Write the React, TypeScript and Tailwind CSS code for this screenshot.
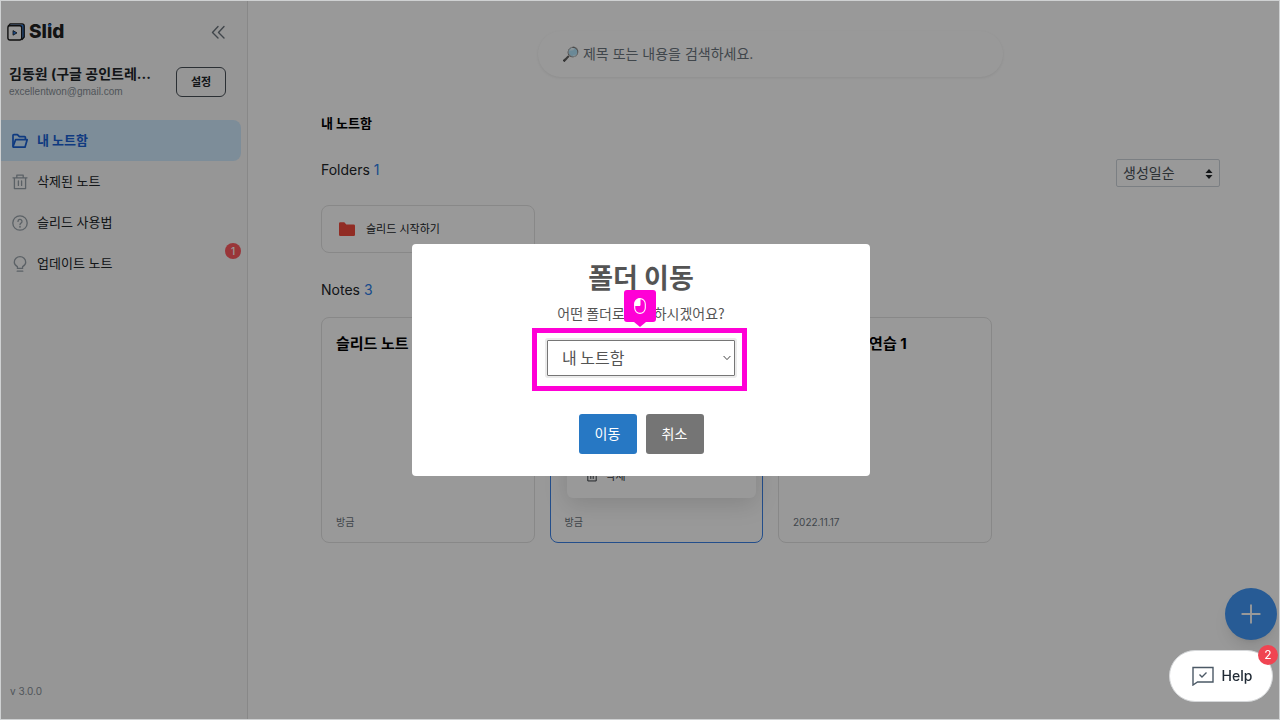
import { ReactNode } from 'react'
import { Plus } from 'lucide-react'

const NOTES = [
  { id: 1, title: '슬리드 노트 정리', date: '방금' },
  { id: 2, title: '슬리드 노트', date: '방금', active: true },
  { id: 3, title: '슬리드 노트 연습 1', date: '2022.11.17' },
]

function FolderOpenIcon() {
  return (
    <svg className="w-4 h-4 shrink-0" viewBox="0 0 16 16" fill="none" stroke="currentColor" strokeWidth="1.7" strokeLinejoin="round">
      <path d="M1 13.600V2.400a.8.8 0 0 1 .8-.8h3.600l2 2h5.200a.8.8 0 0 1 .8.8v2" />
      <path d="M1 13.800 3.600 6.600h11.600L13 14.200H1.400z" />
    </svg>
  )
}

function TrashIcon({ className = 'w-4 h-4' }: { className?: string }) {
  return (
    <svg className={className + ' shrink-0'} viewBox="0 0 16 16" fill="none" stroke="currentColor" strokeWidth="1.3" strokeLinecap="round" strokeLinejoin="round">
      <path d="M1 3.800h14M4.800 3.800V1.200h6.400v2.600M2.400 3.800v10.800h11.200V3.800M6.400 7v4.400M9.600 7v4.400" />
    </svg>
  )
}

function HelpIcon() {
  return (
    <svg className="w-4 h-4 shrink-0" viewBox="0 0 16 16" fill="none" stroke="currentColor" strokeWidth="1.3" strokeLinecap="round">
      <circle cx="8" cy="8" r="7.2" />
      <path d="M6 6.400a2 2 0 1 1 3 1.700c-.7.4-1 .8-1 1.500" />
      <circle cx="8" cy="11.700" r=".3" fill="currentColor" />
    </svg>
  )
}

function BulbIcon() {
  return (
    <svg className="w-4 h-4 shrink-0" viewBox="0 0 16 16" fill="none" stroke="currentColor" strokeWidth="1.3" strokeLinecap="round" strokeLinejoin="round">
      <path d="M5.400 12.400v-1.800C3.600 9.700 2.300 8.200 2.300 6.200a5.700 5.500 0 0 1 11.400 0c0 2-1.300 3.500-3.100 4.400v1.800zM5.200 15.200h5.600" />
    </svg>
  )
}

function Logo() {
  return (
    <div className="flex items-center gap-1">
      <svg className="w-[18px] h-[18px]" viewBox="0 0 18 18" fill="none">
        <path d="M3 1.600h12.400a1.800 1.800 0 0 1 1.800 1.800v11.200l-2 1.800V3.600H1.400z" fill="#2b7de9" />
        <path d="M1 3.400 3.200.9h12a2 2 0 0 1 2 2V14l-2.400 2.800" stroke="#1a1a1a" strokeWidth="1.400" />
        <rect x=".9" y="2.800" width="13.800" height="14.200" rx="2" fill="#fafafa" stroke="#1a1a1a" strokeWidth="1.400" />
        <path d="M6 7.600v4.600l4-2.300z" fill="#2b7de9" stroke="#1a1a1a" strokeWidth=".8" strokeLinejoin="round" />
      </svg>
      <span className="relative text-[19px] leading-6 font-extrabold text-[#212121]">
        Slid
        {/* blue dot of the i */}
        <span className="absolute left-[19px] top-1 w-[3px] h-[3px] rounded-full bg-[#2b7de9]" />
      </span>
    </div>
  )
}

function NavItem({ icon, label, active, badge }: { icon: ReactNode; label: string; active?: boolean; badge?: number }) {
  return (
    <a
      href="#"
      className={`relative flex items-center gap-[9px] h-[41px] pl-[11px] rounded-r-lg text-[13px] ${active ? 'bg-[#d0ebff] text-[#1a62d6] font-bold' : 'text-[#212529]'}`}
    >
      <span className={active ? 'text-[#1a62d6]' : 'text-[#98a2aa]'}>{icon}</span>
      {label}
      {badge && (
        <span className="absolute right-0 top-0 w-4 h-4 rounded-full bg-[#ff5a60] text-white text-[10px] leading-4 font-medium text-center">{badge}</span>
      )}
    </a>
  )
}

function Sidebar() {
  return (
    <aside className="w-[247px] shrink-0 flex flex-col bg-[#fafafa] border-r border-[#e3e3e3]">
      <div className="flex items-center justify-between pt-[19px] pl-1.5 pr-[21px]">
        <Logo />
        <button type="button" aria-label="접기" className="text-[#6c757d]">
          <svg className="w-4 h-4" viewBox="0 0 16 16" fill="none" stroke="currentColor" strokeWidth="1.400" strokeLinecap="round" strokeLinejoin="round">
            <path d="M8 2.500 2.500 8.500 8 14M14 2.500 8.500 8.500 14 14" />
          </svg>
        </button>
      </div>
      <div className="flex items-center justify-between mt-5 pl-2 pr-[21px]">
        <div className="w-[150px]">
          <div className="text-sm leading-5 font-bold text-[#212529] whitespace-nowrap">김동원 (구글 공인트레...</div>
          <div className="text-[10px] leading-4 font-['Liberation_Sans',sans-serif] text-[#868e96]">excellentwon@gmail.com</div>
        </div>
        <button type="button" className="w-[50px] h-[30px] rounded-md border border-[#495057] bg-[#fafafa] text-[11px] font-bold text-[#212529]">설정</button>
      </div>
      <nav className="mt-5 mr-1.5">
        <NavItem icon={<FolderOpenIcon />} label="내 노트함" active />
        <NavItem icon={<TrashIcon />} label="삭제된 노트" />
        <NavItem icon={<HelpIcon />} label="슬리드 사용법" />
        <NavItem icon={<BulbIcon />} label="업데이트 노트" badge={1} />
      </nav>
      <div className="mt-auto pl-[9px] pb-5 text-[10px] leading-4 text-[#868e96]">v 3.0.0</div>
    </aside>
  )
}

function NoteCard({ title, date, active }: { title: string; date: string; active?: boolean }) {
  return (
    <article className={`relative flex flex-col h-[226px] px-3.5 pt-4 pb-3 rounded-lg border ${active ? 'border-[#3b82e8]' : 'border-[#e3e3e3]'}`}>
      <h3 className="text-[15px] leading-5 font-bold text-black whitespace-nowrap">{title}</h3>
      <time className="mt-auto text-[10px] leading-4 text-[#6c757d]">{date}</time>
      {active && (
        <div className="absolute left-4 right-1.5 bottom-11 h-20 rounded-md bg-white shadow-[0_6px_24px_rgba(0,0,0,0.14)] flex items-end px-[19px] pb-3.5">
          <button type="button" className="flex items-center gap-2 text-[11px] leading-4 text-[#343a40]">
            <TrashIcon className="w-3 h-3" />
            삭제
          </button>
        </div>
      )}
    </article>
  )
}

function MoveFolderModal() {
  return (
    <div className="fixed inset-px z-10 flex items-center justify-center bg-black/40">
      <div role="dialog" aria-labelledby="move-title" className="flex flex-col items-center w-[458px] h-[232px] pt-[15px] ml-0.5 rounded-[4px] bg-white font-['Noto_Sans_CJK_KR',sans-serif] text-[#545454]">
        <h2 id="move-title" className="text-[27px] leading-9 font-bold">폴더 이동</h2>
        <label htmlFor="folder" className="mt-2 text-sm leading-5">어떤 폴더로 이동하시겠어요?</label>
        <div className="relative mt-[17px]">
          <select id="folder" className="appearance-none block w-[188px] h-9 pl-3.5 pb-0.5 border border-[#767676] rounded-[1px] text-base leading-6 text-[#545454] bg-white ring-2 ring-[#ebebeb]">
            <option>내 노트함</option>
          </select>
          <svg className="absolute right-1 top-3.5 w-2 h-2 pointer-events-none" viewBox="0 0 8 8" fill="none" stroke="#444" strokeWidth="1">
            <path d="M.6 2 4 5.600 7.400 2" />
          </svg>
          {/* click hint */}
          <div className="absolute -left-[15px] -right-3 -top-3 -bottom-[15px] border-[5px] border-[#ff00d6] pointer-events-none" />
          <div className="absolute left-[77px] -top-[50px] w-8 h-8 rounded-[3px] bg-[#ff00d6] flex items-center justify-center">
            <svg className="w-3 h-4" viewBox="0 0 12 16" fill="none" stroke="#fff">
              <path d="M6 .7v6.800H.8V5.800A5.100 5.100 0 0 1 6 .7z" fill="#fff" />
              <rect x=".7" y=".6" width="10.600" height="14.800" rx="5.300" strokeWidth="1.100" />
            </svg>
            <svg className="absolute top-8 w-3 h-[5px]" viewBox="0 0 12 5" fill="#ff00d6">
              <path d="M0 0h12L6 5z" />
            </svg>
          </div>
        </div>
        <div className="flex gap-[9px] mt-[38px] text-sm text-white">
          <button type="button" className="w-[58px] h-10 pb-0.5 rounded-[3px] bg-[#2778c4]">이동</button>
          <button type="button" className="w-[58px] h-10 pb-0.5 rounded-[3px] bg-[#757575]">취소</button>
        </div>
      </div>
    </div>
  )
}

export default function App() {
  return (
    <div className="flex min-h-screen border border-[#cfd1d2] bg-white font-['Inter','Noto_Sans_CJK_KR',sans-serif]">
      <Sidebar />

      <main className="flex-1 min-w-0 pl-[73px] pr-[59px] pt-[30px]">
        <input
          type="search"
          aria-label="검색"
          placeholder="🔎 제목 또는 내용을 검색하세요."
          className="block w-[465px] h-[46px] mx-auto px-6 pb-0.5 rounded-full bg-white shadow-[0_1px_3px_rgba(0,0,0,0.08)] text-sm placeholder:text-[#6c757d]"
        />
        <h1 className="mt-9 text-[13px] leading-5 font-bold text-black">내 노트함</h1>
        <div className="flex items-center justify-between mt-[26px]">
          <h2 className="pb-1.5 text-sm leading-5 text-[#212529]">Folders <span className="text-[#2b7de9]">1</span></h2>
          <div className="relative">
            <select aria-label="정렬" className="appearance-none block w-[104px] h-7 pl-1.5 border border-[#ced4da] rounded-xs bg-white text-sm leading-5 text-[#495057]">
              <option>생성일순</option>
            </select>
            <svg className="absolute right-[7px] top-2.5 w-2 h-2.5 pointer-events-none" viewBox="0 0 8 10" fill="#212529">
              <path d="M4 0 7.500 4h-7zM4 10 .5 6h7z" />
            </svg>
          </div>
        </div>
        <div className="grid grid-cols-4 gap-[15px] mt-[18px]">
          <a href="#" className="flex items-center gap-[11px] h-12 px-[17px] rounded-lg border border-[#e3e3e3] text-[11px] text-[#212529]">
            <svg className="w-4 h-4" viewBox="0 0 16 16" fill="#f24a3c">
              <path d="M0 2.500A1.300 1.300 0 0 1 1.300 1.200h4l2 2.200h7.400A1.300 1.300 0 0 1 16 4.700v9a1.300 1.300 0 0 1-1.300 1.300H1.300A1.300 1.300 0 0 1 0 13.700z" />
            </svg>
            슬리드 시작하기
          </a>
        </div>
        <h2 className="mt-[27px] text-sm leading-5 text-[#212529]">Notes <span className="text-[#2b7de9]">3</span></h2>
        <div className="grid grid-cols-4 gap-[15px] mt-[17px]">
          {NOTES.map(n => <NoteCard key={n.id} title={n.title} date={n.date} active={n.active} />)}
        </div>
      </main>

      <button type="button" aria-label="새 노트" className="fixed right-[3px] bottom-20 w-[52px] h-[52px] rounded-full bg-[#4298f8] text-white shadow-lg flex items-center justify-center">
        <Plus size={30} strokeWidth={1.500} />
      </button>

      <MoveFolderModal />

      <button type="button" className="fixed z-20 right-[7px] bottom-[18px] w-[104px] h-[52px] pl-0.5 rounded-full border border-[#d5d7d9] bg-white flex items-center justify-center gap-2 text-sm font-medium text-[#212b36]">
        <svg className="w-[22px] h-5" viewBox="0 0 22 20" fill="none" stroke="#4b5966" strokeWidth="1.400">
          <path d="M1 1.500h20v14.500H5.500L1 19z" />
          <path d="M7.500 8.500 10 11l4.500-4.500" />
        </svg>
        Help
        <span className="absolute -right-1.5 -top-1.5 w-5 h-5 rounded-full bg-[#f04452] text-white text-xs leading-5 font-normal">2</span>
      </button>
    </div>
  )
}
